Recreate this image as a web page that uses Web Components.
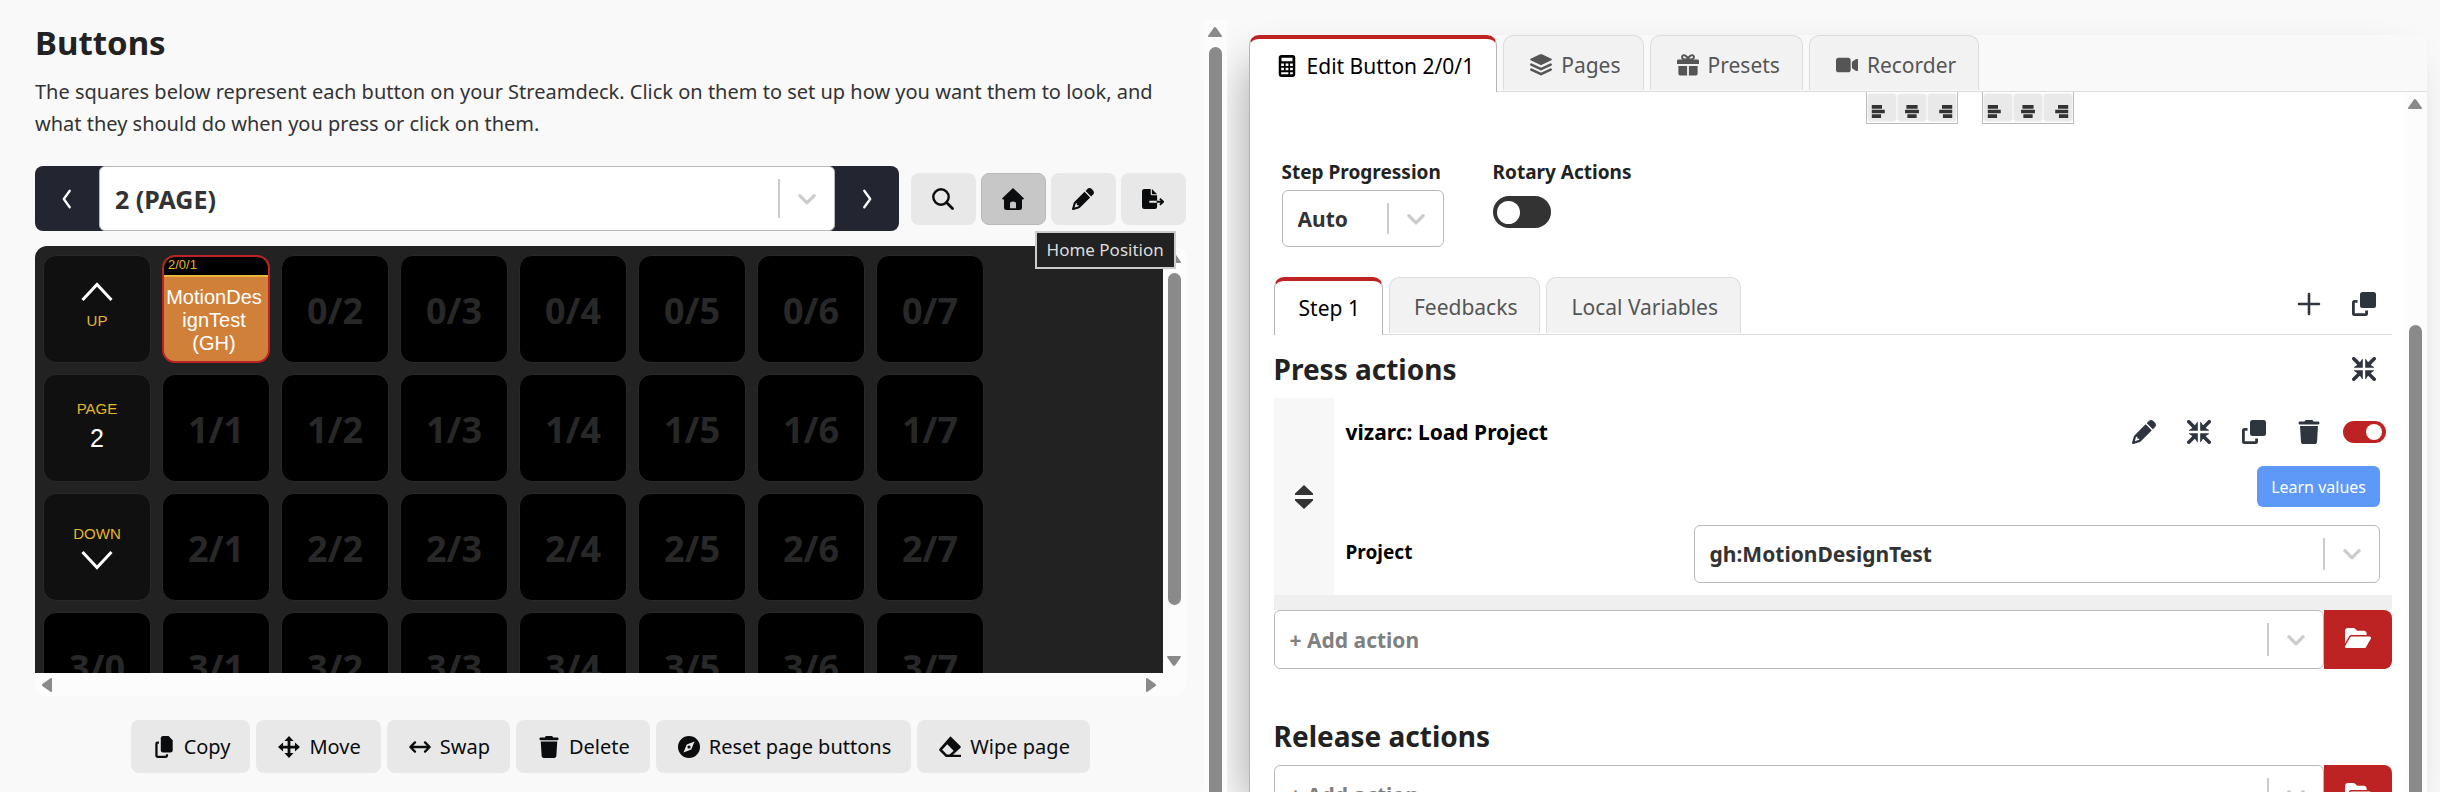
<!DOCTYPE html>
<html lang="en">
<head>
<meta charset="utf-8">
<title>Buttons</title>
<style>
    html, body {
        height: 100%;
        margin: 0;
    }
    body {
        overflow: hidden;
        background: #f9f9f9;
        color: #222;
        font: 20px/32px "Noto Sans", "Open Sans", sans-serif;
    }
</style>
</head>
<body>
<admin-app></admin-app>

<script>
"use strict";

// name: [viewBox, markup]
const ICONS = {
    'left': ['0 0 24 24', '<path d="M15 3L8.500 12l6.500 9" fill="none" stroke="currentColor" stroke-width="2.500" stroke-linecap="round" stroke-linejoin="round"/>'],
    'right': ['0 0 24 24', '<path d="M9 3L15.500 12L9 21" fill="none" stroke="currentColor" stroke-width="2.500" stroke-linecap="round" stroke-linejoin="round"/>'],
    'down': ['0 0 20 20', '<path d="M3.500 7L10 13.500L16.500 7" fill="none" stroke="currentColor" stroke-width="3" stroke-linecap="round" stroke-linejoin="round"/>'],
    'page-up': ['0 0 32 20', '<path d="M1.500 18L16 2.500L30.500 18" fill="none" stroke="currentColor" stroke-width="3"/>'],
    'page-down': ['0 0 32 20', '<path d="M1.500 2L16 17.500L30.500 2" fill="none" stroke="currentColor" stroke-width="3"/>'],
    'search': ['0 0 22 22', '<circle cx="9" cy="9" r="7.700" fill="none" stroke="currentColor" stroke-width="2.400"/><path d="M14.500 14.500L20.500 20.500" stroke="currentColor" stroke-width="2.800" stroke-linecap="round"/>'],
    'home': ['0 0 22 22', '<path fill-rule="evenodd" d="M11 0L22 10.500Q21.800 11.800 20 11.500V19.500Q20 22 17.500 22H4.500Q2 22 2 19.500V11.500Q.2 11.800 0 10.500ZM8 20.200H14V15.500Q14 13.500 11 13.500T8 15.500Z"/>'],
    'pencil': ['0 0 512 512', '<path d="M410.3 231l11.3-11.3-33.9-33.9-62.1-62.1L291.7 89.8l-11.3 11.3-22.6 22.6L58.600 322.900c-10.400 10.400-18 23.300-22.200 37.400L1 480.700c-2.500 8.400-.2 17.500 6.100 23.700s15.300 8.500 23.700 6.100l120.300-35.400c14.100-4.200 27-11.800 37.400-22.200L387.700 253.700 410.300 231zM160 399.400l-9.100 22.700c-4 3.100-8.500 5.400-13.300 6.900L59.400 452l23-78.100c1.400-4.900 3.800-9.400 6.900-13.300l22.700-9.100v32c0 8.800 7.200 16 16 16h32zM362.700 18.700L348.300 33.200 325.700 55.800 314.300 67.100l33.900 33.900 62.100 62.100 33.900 33.900 11.300-11.300 22.600-22.600 14.500-14.500c25-25 25-65.500 0-90.500L453.300 18.700c-25-25-65.500-25-90.500 0z"/>'],
    'export': ['0 0 24 22', '<path fill-rule="evenodd" d="M2.500 0H9.500V5.500Q9.500 7 11 7H16.500V13H8V15H16.500V19.500Q16.500 22 14 22H2.500Q0 22 0 19.500V2.500Q0 0 2.500 0ZM10.800 0L16.500 5.700H10.800Z"/><path d="M16 14H22.500M19.500 10.500L23 14L19.500 17.500" fill="none" stroke="currentColor" stroke-width="2"/>'],
    'copy': ['0 0 24 24', '<path d="M11 0H17L21.500 4.500V15.500Q21.500 18 19 18H11Q8.500 18 8.500 15.500V2.500Q8.500 0 11 0Z"/><path d="M6.500 6H5Q2.500 6 2.500 8.500V21Q2.500 24 5.500 24H13.500Q16.500 24 16.500 20.500V20H14V21.500H5V8.500H6.500Z"/>'],
    'move': ['0 0 24 24', '<path d="M12 0L17 5.500H13.500V10.500H18.500V7L24 12L18.500 17V13.500H13.500V18.500H17L12 24L7 18.500H10.500V13.500H5.500V17L0 12L5.500 7V10.500H10.500V5.500H7Z"/>'],
    'swap': ['0 0 24 24', '<path d="M2 12H22M6.500 7L1.500 12L6.500 17M17.500 7L22.500 12L17.500 17" fill="none" stroke="currentColor" stroke-width="2.500" stroke-linecap="round" stroke-linejoin="round"/>'],
    'trash': ['0 0 448 512', '<path d="M135.200 17.700L128 32H32C14.300 32 0 46.300 0 64S14.300 96 32 96H416c17.700 0 32-14.300 32-32s-14.300-32-32-32H320l-7.200-14.300C307.400 6.800 296.300 0 284.200 0H163.800c-12.100 0-23.200 6.800-28.600 17.700zM416 128H32L53.200 467c1.600 25.300 22.600 45 47.900 45H346.900c25.300 0 46.300-19.700 47.900-45L416 128z"/>'],
    'compass': ['0 0 24 24', '<path fill-rule="evenodd" d="M12 0A12 12 0 1 1 12 24A12 12 0 1 1 12 0ZM18 6L9.500 9.200L6 18L14.500 14.800Z"/><circle cx="12" cy="12" r="1.700"/>'],
    'eraser': ['0 0 24 24', '<path fill-rule="evenodd" d="M13 .8L23.500 11.300Q24 12 23.500 12.700L15.300 20.500H24V23H7.500L.6 16Q-.2 15 .6 13.800L12 .8Q12.500 .3 13 .8ZM9 9L3.500 15L8.600 20.300H11.500L16 16Z"/>'],
    'calculator': ['0 0 384 512', '<path fill-rule="evenodd" d="M64 0H320a64 64 0 0 1 64 64V448a64 64 0 0 1-64 64H64a64 64 0 0 1-64-64V64A64 64 0 0 1 64 0ZM64 64V144H320V64ZM56 200v56h64v-56ZM160 200v56h64v-56ZM264 200v56h64v-56ZM56 296v56h64v-56ZM160 296v56h64v-56ZM264 296v56h64v-56ZM56 400v48h168v-48ZM264 400v48h64v-48Z"/>'],
    'layers': ['0 0 24 24', '<path d="M11 .4Q12 0 13 .4L23.300 5.200Q24.500 6 23.300 6.800L13 11.800Q12 12.200 11 11.800L.7 6.800Q-.5 6 .7 5.200Z"/><path d="M1.500 11.500L12 16.500L22.500 11.500M1.500 17L12 22L22.500 17" fill="none" stroke="currentColor" stroke-width="2.800" stroke-linecap="round" stroke-linejoin="round"/>'],
    'gift': ['0 0 24 24', '<path d="M12 6C11 1 6 0 5.500 3.200C5.200 6 9 6 12 6C15 6 18.800 6 18.500 3.200C18 0 13 1 12 6Z" fill="none" stroke="currentColor" stroke-width="2.200"/><path d="M1.500 6H22.500Q24 6 24 7.500V11H0V7.500Q0 6 1.500 6ZM1.500 13H11V23.500H3.500Q1.500 23.500 1.500 21.500ZM13 13H22.500V21.500Q22.500 23.500 20.500 23.500H13Z"/>'],
    'video': ['0 0 576 512', '<path d="M0 128C0 92.700 28.700 64 64 64H320c35.300 0 64 28.700 64 64V384c0 35.300-28.700 64-64 64H64c-35.300 0-64-28.700-64-64V128zM559.100 99.800c10.400 5.600 16.900 16.400 16.900 28.200V384c0 11.800-6.500 22.600-16.900 28.200s-23 5-32.900-1.600l-96-64L416 337.100V320 192 174.900l14.200-9.500 96-64c9.800-6.500 22.400-7.200 32.900-1.600z"/>'],
    'plus': ['0 0 24 24', '<path d="M12 2V22M2 12H22" stroke="currentColor" stroke-width="2.600" stroke-linecap="round"/>'],
    'clone': ['0 0 24 24', '<rect x="8" width="16" height="16" rx="2.500"/><path d="M5.500 8H2.500Q0 8 0 10.500V21.500Q0 24 2.500 24H13.500Q16 24 16 21.500V18.500H13.200V21.200H2.800V10.800H5.500Z"/>'],
    'compress': ['0 0 24 24', '<g id="q"><path d="M10.800 1.800V10.800H1.800Q1.800 9.800 4.500 8.500L8.500 4.500Q9.800 1.800 10.800 1.800Z"/><path d="M1.800 1.800L8 8" stroke="currentColor" stroke-width="3.600" stroke-linecap="round"/></g><use href="#q" transform="rotate(90 12 12)"/><use href="#q" transform="rotate(180 12 12)"/><use href="#q" transform="rotate(270 12 12)"/>'],
    'folder': ['0 0 576 512', '<path d="M88.700 223.800L0 375.800V96C0 60.700 28.700 32 64 32H181.500c17 0 33.300 6.700 45.300 18.700l26.500 26.500c12 12 28.300 18.700 45.300 18.700H416c35.300 0 64 28.700 64 64v32H144c-22.800 0-43.800 12.100-55.300 31.800zm27.600 16.100C122.100 230 132.600 224 144 224H544c11.500 0 22 6.100 27.700 16.100s5.700 22.200-.1 32.100l-112 192C453.900 474 443.400 480 432 480H32c-11.500 0-22-6.100-27.700-16.100s-5.700-22.200 .1-32.100l112-192z"/>'],
    'sort': ['0 0 24 24', '<path d="M12 0L21 8.500V10H3V8.500ZM12 24L21 15.500V14H3V15.500Z"/>'],
    'align-left': ['0 0 22 14', '<path d="M0 0H11V4H0ZM0 5H14V9H0ZM0 10H10V14H0Z"/>'],
    'align-center': ['0 0 22 14', '<path d="M5 0H17V4H5ZM3.500 5H18.500V9H3.500ZM6 10H16V14H6Z"/>'],
    'align-right': ['0 0 22 14', '<path d="M11 0H22V4H11ZM8 5H22V9H8ZM12 10H22V14H12Z"/>'],
    'arrow-up': ['0 0 16 12', '<path d="M8 1Q8.700 1 9.200 1.700L14.700 9.500Q15.500 11 14 11H2Q.5 11 1.300 9.500L6.800 1.700Q7.300 1 8 1Z"/>'],
};

class BaseElement extends HTMLElement {
    constructor() {
        super();
        this.attachShadow({ mode: 'open' });
    }
    connectedCallback() {
        this.shadowRoot.innerHTML = `
            <style>
                *, *::before { box-sizing: border-box; }
                button, select, input { font: inherit; color: inherit; margin: 0; }
                ${this.styles()}
            </style>
            ${this.render()}
        `;
    }
    attr(name, fallback = '') {
        return this.getAttribute(name) ?? fallback;
    }
    styles() { return ''; }
    render() { return '<slot></slot>'; }
}

class AppIcon extends BaseElement {
    styles() {
        return `
            :host { display: block; flex: none; width: var(--icon-size, 22px); }
            svg { display: block; width: 100%; height: var(--icon-height, var(--icon-size, 22px)); fill: currentColor; }
        `;
    }
    render() {
        const [box, shape] = ICONS[this.attr('name')];
        return `<svg viewBox="${box}" aria-hidden="true">${shape}</svg>`;
    }
}

class GreyButton extends BaseElement {
    styles() {
        return `
            :host { display: block; position: relative; }
            button {
                display: flex;
                align-items: center;
                justify-content: center;
                gap: 9px;
                height: 53px;
                padding: 0 19px 0 21px;
                border: 1px solid transparent;
                border-radius: 8px;
                background: #e8e8e8;
                color: #0a0c0d;
            }
            :host([square]) button { width: 65px; height: 52px; padding: 0; }
            :host([active]) button { background: #c7c7c7; border-color: #b8b8b8; }
            .tip {
                position: absolute;
                top: 58px;
                left: 54px;
                z-index: 2;
                padding: 1px 10px;
                border: 2px solid #ccc;
                background: #222;
                color: #ddd;
                font-size: 17px;
                white-space: nowrap;
            }
        `;
    }
    render() {
        const tip = this.attr('tip');
        return `
            <button type="button" aria-label="${this.attr('label', this.textContent)}">
                <app-icon name="${this.attr('icon')}"></app-icon><slot></slot>
            </button>
            ${tip ? `<div class="tip" role="tooltip">${tip}</div>` : ''}
        `;
    }
}

class PlainButton extends BaseElement {
    styles() {
        return `
            :host { display: block; }
            button {
                display: grid;
                place-items: center;
                width: 55px;
                height: 40px;
                padding: 0;
                border: 0;
                background: none;
                color: #2f353f;
                --icon-size: 24px;
            }
        `;
    }
    render() {
        return `<button type="button" aria-label="${this.attr('label')}"><app-icon name="${this.attr('icon')}"></app-icon></button>`;
    }
}

class DropDown extends BaseElement {
    styles() {
        return `
            :host { display: block; min-width: 0; }
            :host([layout=row]) { display: grid; grid-template-columns: 348px 1fr; align-items: center; }
            label {
                display: block;
                margin-bottom: 4px;
                font-weight: 700;
                font-size: 19px;
                line-height: 28px;
            }
            .box {
                display: flex;
                align-items: center;
                height: var(--field-height, 58px);
                border: 1px solid #b9b9b9;
                border-radius: 6px;
                background: #fff;
                color: #333;
            }
            select {
                flex: 1;
                min-width: 0;
                height: 100%;
                padding: 0 0 0 15px;
                border: 0;
                background: none;
                appearance: none;
                outline: 0;
                font-weight: 700;
                font-size: var(--field-font, 21px);
            }
            :host([muted]) select { color: #808080; }
            .arrow {
                display: grid;
                place-items: center;
                align-self: stretch;
                width: 56px;
                margin: 12px 0;
                border-left: 2px solid #ccc;
                color: #ccc;
            }
        `;
    }
    render() {
        const label = this.attr('label');
        return `
            ${label ? `<label for="field">${label}</label>` : ''}
            <div class="box">
                <select id="field" ${label ? '' : `aria-label="${this.attr('name')}"`}>
                    <option>${this.attr('value')}</option>
                </select>
                <span class="arrow"><app-icon name="down"></app-icon></span>
            </div>
        `;
    }
}

class ToggleSwitch extends BaseElement {
    styles() {
        return `
            :host { display: block; }
            label { display: block; margin-bottom: 10px; font-weight: 700; font-size: 19px; line-height: 28px; }
            input {
                display: flex;
                align-items: center;
                width: 58px;
                height: 32px;
                padding: 0 4px;
                border-radius: 16px;
                background: #333;
                appearance: none;
            }
            input::before { content: ""; width: 23px; height: 23px; border-radius: 50%; background: #fff; }
            :host([small]) input { width: 43px; height: 22px; }
            :host([small]) input::before { width: 16px; height: 16px; }
            input:checked { justify-content: flex-end; background: #bd2323; }
        `;
    }
    render() {
        const label = this.attr('label');
        return `
            ${label ? `<label for="toggle">${label}</label>` : ''}
            <input type="checkbox" id="toggle" ${this.hasAttribute('checked') ? 'checked' : ''} ${label ? '' : `aria-label="${this.attr('name')}"`}>
        `;
    }
}

class ScrollBar extends BaseElement {
    styles() {
        return `
            :host {
                display: flex;
                flex-direction: column;
                align-items: center;
                width: 23px;
                padding: 6px 0;
                box-sizing: border-box;
                background: #fcfcfc;
                color: #8a8a8a;
                --icon-size: 16px;
                --icon-height: 12px;
            }
            :host([open-ended]) { padding-bottom: 0; }
            :host([horizontal]) { flex-direction: row; justify-content: space-between; width: auto; height: 23px; padding: 0 4px; }
            .flip { transform: rotate(180deg); }
            :host([horizontal]) .back { transform: rotate(270deg); }
            :host([horizontal]) .flip { transform: rotate(90deg); }
            .lead { flex: none; height: var(--lead, 9px); }
            .thumb { flex: 1; width: 13px; border-radius: 7px; background: #8a8a8a; }
            :host([open-ended]) .thumb { border-radius: 7px 7px 0 0; }
            .trail { flex: none; height: var(--trail, 0); }
        `;
    }
    render() {
        const back = '<app-icon class="back" name="arrow-up"></app-icon>';
        const flip = '<app-icon class="flip" name="arrow-up"></app-icon>';
        if (this.hasAttribute('horizontal'))
            return back + flip;
        return `
            ${back}
            <div class="lead"></div><div class="thumb"></div>
            ${this.hasAttribute('open-ended') ? '' : `<div class="trail"></div>${flip}`}
        `;
    }
}

class PageNav extends BaseElement {
    styles() {
        return `
            :host { display: flex; flex: 1; background: #232530; border-radius: 8px; }
            button {
                display: grid;
                place-items: center;
                width: 64px;
                height: 65px;
                padding: 0;
                border: 0;
                background: none;
                color: #fff;
            }
            drop-down { flex: 1; --field-height: 65px; --field-font: 25px; }
        `;
    }
    render() {
        return `
            <button type="button" aria-label="Previous page"><app-icon name="left"></app-icon></button>
            <drop-down name="Page" value="2 (PAGE)"></drop-down>
            <button type="button" aria-label="Next page"><app-icon name="right"></app-icon></button>
        `;
    }
}

class DeckKey extends BaseElement {
    styles() {
        return `
            :host { display: block; }
            button {
                display: flex;
                flex-direction: column;
                align-items: center;
                justify-content: center;
                width: 108px;
                height: 108px;
                padding: 4px 0 0;
                border: 1px solid #292929;
                border-radius: 13px;
                background: #000;
                color: #282828;
                font-weight: 700;
                font-size: 36px;
                overflow: hidden;
            }
            :host([kind]) button {
                font: 15px/20px "Liberation Sans", Arial, sans-serif;
                background: #101010;
                color: #e3b72e;
            }
            app-icon { color: #fff; --icon-size: 32px; --icon-height: 20px; }
            :host([kind=up]) button { gap: 9px; padding: 0 0 6px; }
            :host([kind=down]) button { gap: 6px; padding: 0; }
            :host([kind=page]) button { gap: 4px; padding: 0 0 4px; }
            b { color: #fff; font-weight: 400; font-size: 25px; line-height: 30px; }
            :host([kind=set]) button {
                justify-content: flex-start;
                align-items: stretch;
                padding: 0;
                border: 2px solid #bd2323;
                background: #d18039;
            }
            .bar {
                height: 20px;
                padding-left: 4px;
                border-bottom: 2px solid #eab83a;
                background: #000;
                font-size: 13px;
                line-height: 16px;
                text-align: left;
            }
            .text {
                flex: 1;
                display: grid;
                align-content: center;
                padding: 2px 4px 0 0;
                color: #fff;
                font-size: 20px;
                line-height: 23px;
            }
        `;
    }
    render() {
        const key = this.attr('key');
        const faces = {
            up: '<app-icon name="page-up"></app-icon>UP',
            down: 'DOWN<app-icon name="page-down"></app-icon>',
            page: 'PAGE<b>2</b>',
            set: `<span class="bar">2/${key}</span><span class="text"><span>MotionDes</span><span>ignTest</span><span>(GH)</span></span>`,
        };
        return `<button type="button">${faces[this.attr('kind')] ?? key}</button>`;
    }
}

class DeckGrid extends BaseElement {
    styles() {
        return `
            :host {
                display: grid;
                grid-template-columns: 1fr 23px;
                grid-template-rows: 1fr 23px;
                min-height: 0;
                border-radius: 12px;
                background: #fcfcfc;
                overflow: hidden;
            }
            .view { min-height: 0; padding: 9px 8px; background: #222; overflow: hidden; }
            .keys { display: grid; grid-template-columns: repeat(8, max-content); gap: 11px; }
            scroll-bar { --trail: 50px; }
        `;
    }
    render() {
        const kinds = { '0/0': 'up', '1/0': 'page', '2/0': 'down', '0/1': 'set' };
        let keys = '';
        for (let row = 0; row < 4; row++) {
            for (let col = 0; col < 8; col++) {
                const key = `${row}/${col}`;
                keys += `<deck-key key="${key}" ${kinds[key] ? `kind="${kinds[key]}"` : ''}></deck-key>`;
            }
        }
        return `
            <div class="view"><div class="keys">${keys}</div></div>
            <scroll-bar></scroll-bar>
            <scroll-bar horizontal></scroll-bar>
        `;
    }
}

class ButtonsPanel extends BaseElement {
    styles() {
        return `
            :host { display: flex; min-width: 0; min-height: 0; margin-top: 20px; z-index: 1; }
            .main { flex: 1; display: flex; flex-direction: column; min-width: 0; padding: 0 18px 19px 35px; }
            h1 { margin: 0 0 10px; font-size: 33px; line-height: 46px; }
            p { margin: 0 0 26px; color: #333; }
            .row { display: flex; align-items: center; gap: 5px; margin-bottom: 15px; }
            page-nav { margin-right: 7px; }
            deck-grid { flex: 1; margin-bottom: 24px; }
            .actions { display: flex; justify-content: center; gap: 6px; }
        `;
    }
    render() {
        return `
            <div class="main">
                <h1>Buttons</h1>
                <p>The squares below represent each button on your Streamdeck. Click on them to set up how you want them to look, and what they should do when you press or click on them.</p>
                <div class="row">
                    <page-nav></page-nav>
                    <grey-button square icon="search" label="Search"></grey-button>
                    <grey-button square active icon="home" label="Home" tip="Home Position"></grey-button>
                    <grey-button square icon="pencil" label="Edit page"></grey-button>
                    <grey-button square icon="export" label="Export page"></grey-button>
                </div>
                <deck-grid></deck-grid>
                <div class="actions">
                    <grey-button icon="copy">Copy</grey-button>
                    <grey-button icon="move">Move</grey-button>
                    <grey-button icon="swap">Swap</grey-button>
                    <grey-button icon="trash">Delete</grey-button>
                    <grey-button icon="compass">Reset page buttons</grey-button>
                    <grey-button icon="eraser">Wipe page</grey-button>
                </div>
            </div>
            <scroll-bar open-ended></scroll-bar>
        `;
    }
}

class TabItem extends BaseElement {
    styles() {
        return `
            :host { display: block; padding-bottom: 1px; }
            :host([active]) { margin-bottom: -1px; padding: 0; }
            button {
                display: flex;
                align-items: center;
                gap: 9px;
                height: 100%;
                padding: 3px 22px 0 24px;
                border: 1px solid #dcdcdc;
                border-bottom: 0;
                border-radius: 10px 10px 0 0;
                background: #f2f2f2;
                color: #555;
                font-size: 21px;
            }
            :host([icon]) button { padding-left: 26px; }
            :host([active]) button {
                padding-top: 0;
                border-color: #b5b5b5;
                border-top: 4px solid #bd2323;
                background: #fff;
                color: #000;
            }
        `;
    }
    render() {
        const icon = this.attr('icon');
        return `
            <button type="button" role="tab" aria-selected="${this.hasAttribute('active')}">
                ${icon ? `<app-icon name="${icon}"></app-icon>` : ''}<slot></slot>
            </button>
        `;
    }
}

class TabStrip extends BaseElement {
    styles() {
        return `
            :host { display: flex; height: 57px; box-sizing: border-box; border-bottom: 1px solid #dbdbe2; }
            .tabs { display: flex; gap: 6px; flex: 1; }
            .tools { display: flex; align-items: center; padding-bottom: 3px; }
        `;
    }
    render() {
        return `
            <div class="tabs" role="tablist"><slot></slot></div>
            <div class="tools"><slot name="tools"></slot></div>
        `;
    }
}

class AlignPicker extends BaseElement {
    styles() {
        return `
            :host {
                display: grid;
                grid-template-columns: repeat(3, 30px);
                row-gap: 1px;
                padding: 0 0 1px;
                border: 1px solid #bbb;
                border-top: 0;
                background: #fff;
            }
            button {
                display: grid;
                place-items: center;
                height: 29px;
                padding: 7px 0 0;
                border: 1px solid #f4f4f4;
                border-radius: 4px;
                background: #e9e9e9;
                color: #333;
                --icon-height: 13px;
            }
            .on { border-color: #dd7777; }
        `;
    }
    render() {
        const row = (on) => ['left', 'center', 'right'].map((side) =>
            `<button type="button" class="${side === on ? 'on' : ''}" aria-label="Align ${side}"><app-icon name="align-${side}"></app-icon></button>`).join('');
        return row('center') + row('');
    }
}

class AddAction extends BaseElement {
    styles() {
        return `
            :host { display: flex; border-radius: 8px; }
            drop-down { flex: 1; --field-height: 59px; }
            button {
                display: grid;
                place-items: center;
                width: 68px;
                padding: 0 0 4px;
                border: 0;
                border-radius: 0 8px 8px 0;
                background: #bd2323;
                color: #fff;
                --icon-size: 26px;
            }
        `;
    }
    render() {
        return `
            <drop-down muted name="Add action" value="+ Add action"></drop-down>
            <button type="button" aria-label="Browse actions"><app-icon name="folder"></app-icon></button>
        `;
    }
}

class ActionItem extends BaseElement {
    styles() {
        return `
            :host { display: flex; border-bottom: 15px solid #efefef; color: #000; }
            .handle { display: grid; place-items: center; width: 60px; background: #f7f7f7; color: #333; --icon-size: 24px; }
            .body { flex: 1; padding: 0 0 12px 12px; }
            .head { display: flex; align-items: center; height: 68px; }
            h3 { flex: 1; margin: 0; font-weight: 700; font-size: 21px; }
            .toggle { display: grid; justify-items: center; width: 55px; }
            .learn {
                display: block;
                height: 41px;
                margin: 0 12px 18px auto;
                padding: 0 14px;
                border: 0;
                border-radius: 6px;
                background: #5e99f8;
                color: #fff;
                font-size: 16px;
            }
        `;
    }
    render() {
        return `
            <div class="handle"><app-icon name="sort"></app-icon></div>
            <div class="body">
                <div class="head">
                    <h3>${this.attr('heading')}</h3>
                    <plain-button icon="pencil" label="Rename"></plain-button>
                    <plain-button icon="compress" label="Collapse"></plain-button>
                    <plain-button icon="clone" label="Duplicate"></plain-button>
                    <plain-button icon="trash" label="Delete"></plain-button>
                    <div class="toggle"><toggle-switch small checked name="Enabled"></toggle-switch></div>
                </div>
                <button class="learn" type="button">Learn values</button>
                <slot></slot>
            </div>
        `;
    }
}

class EditPanel extends BaseElement {
    styles() {
        return `
            :host {
                display: flex;
                flex-direction: column;
                min-width: 0;
                min-height: 0;
                margin-top: 35px;
                border-radius: 10px 0 0;
                background: #f9f9f9;
                box-shadow: -12px 20px 40px -10px rgba(0, 0, 0, .32);
            }
            .scroll { flex: 1; display: flex; min-height: 0; overflow: hidden; border-left: 1px solid #b5b5b5; background: #fff; }
            .content { flex: 1; min-width: 0; padding: 0 12px 0 24px; }
            .align {
                display: flex;
                align-items: flex-end;
                gap: 24px;
                height: 32px;
                margin-bottom: 34px;
                padding-left: 53%;
                overflow: hidden;
            }
            .options { display: flex; gap: 49px; margin: 0 0 30px 8px; }
            .options drop-down { width: 162px; --field-height: 57px; }
            .content tab-strip { height: 58px; }
            .title { display: flex; align-items: center; justify-content: space-between; margin: 14px 0 9px; }
            h2 { margin: 0; font-weight: 700; font-size: 28px; line-height: 40px; }
            .release { margin-top: 47px; }
            .scroll > scroll-bar { --lead: 215px; }
            action-item drop-down { margin-right: 12px; }
        `;
    }
    render() {
        return `
            <tab-strip>
                <tab-item active icon="calculator">Edit Button 2/0/1</tab-item>
                <tab-item icon="layers">Pages</tab-item>
                <tab-item icon="gift">Presets</tab-item>
                <tab-item icon="video">Recorder</tab-item>
            </tab-strip>
            <div class="scroll">
                <div class="content">
                    <div class="align"><align-picker></align-picker><align-picker></align-picker></div>
                    <div class="options">
                        <drop-down label="Step Progression" value="Auto"></drop-down>
                        <toggle-switch label="Rotary Actions"></toggle-switch>
                    </div>
                    <tab-strip>
                        <tab-item active>Step 1</tab-item>
                        <tab-item>Feedbacks</tab-item>
                        <tab-item>Local Variables</tab-item>
                        <plain-button slot="tools" icon="plus" label="Add step"></plain-button>
                        <plain-button slot="tools" icon="clone" label="Duplicate step"></plain-button>
                    </tab-strip>
                    <div class="title">
                        <h2>Press actions</h2>
                        <plain-button icon="compress" label="Collapse all"></plain-button>
                    </div>
                    <action-item heading="vizarc: Load Project">
                        <drop-down layout="row" label="Project" value="gh:MotionDesignTest"></drop-down>
                    </action-item>
                    <add-action></add-action>
                    <div class="title release"><h2>Release actions</h2></div>
                    <add-action></add-action>
                </div>
                <scroll-bar open-ended></scroll-bar>
            </div>
        `;
    }
}

class AdminApp extends BaseElement {
    styles() {
        return `
            :host {
                display: grid;
                grid-template-columns: 51fr 49fr;
                grid-template-rows: 100%;
                gap: 22px;
                height: 100%;
                padding-right: 13px;
                box-sizing: border-box;
            }
        `;
    }
    render() {
        return '<buttons-panel></buttons-panel><edit-panel></edit-panel>';
    }
}

customElements.define('app-icon', AppIcon);
customElements.define('grey-button', GreyButton);
customElements.define('plain-button', PlainButton);
customElements.define('drop-down', DropDown);
customElements.define('toggle-switch', ToggleSwitch);
customElements.define('scroll-bar', ScrollBar);
customElements.define('page-nav', PageNav);
customElements.define('deck-key', DeckKey);
customElements.define('deck-grid', DeckGrid);
customElements.define('buttons-panel', ButtonsPanel);
customElements.define('tab-item', TabItem);
customElements.define('tab-strip', TabStrip);
customElements.define('align-picker', AlignPicker);
customElements.define('add-action', AddAction);
customElements.define('action-item', ActionItem);
customElements.define('edit-panel', EditPanel);
customElements.define('admin-app', AdminApp);
</script>
</body>
</html>
